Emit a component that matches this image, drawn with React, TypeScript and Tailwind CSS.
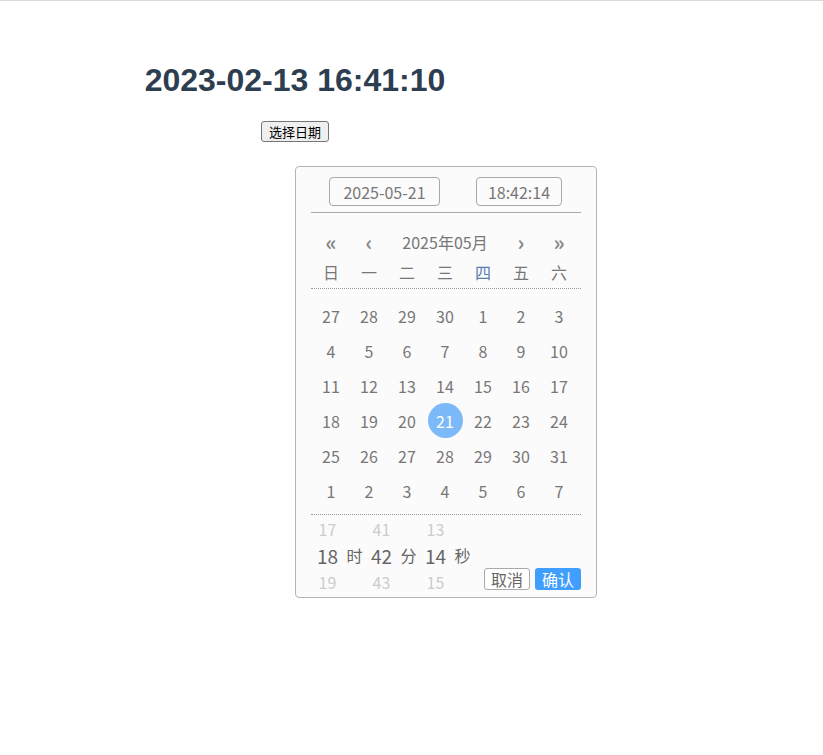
import React from "react";

const font = { fontFamily: '"Noto Sans CJK SC", "Noto Sans", sans-serif' };

const weeks = [
  [27, 28, 29, 30, 1, 2, 3],
  [4, 5, 6, 7, 8, 9, 10],
  [11, 12, 13, 14, 15, 16, 17],
  [18, 19, 20, 21, 22, 23, 24],
  [25, 26, 27, 28, 29, 30, 31],
  [1, 2, 3, 4, 5, 6, 7],
];

const weekdays = ["日", "一", "二", "三", "四", "五", "六"];

function TimeCol({ top, mid, bot, unit }: { top: string; mid: string; bot: string; unit: string }) {
  return (
    <>
      <div className="w-[27px] flex flex-col items-center">
        <div className="h-[26px] leading-[26px] text-[16px] text-[#cccccc]">{top}</div>
        <div className="h-[27px] leading-[27px] text-[19px] text-[#666]">{mid}</div>
        <div className="h-[26px] leading-[26px] text-[16px] text-[#cccccc]">{bot}</div>
      </div>
      <div className="w-[27px] flex flex-col items-center">
        <div className="h-[26px]" />
        <div className="h-[27px] leading-[27px] text-[16px] text-[#666]">{unit}</div>
      </div>
    </>
  );
}

export default function App() {
  return (
    <div className="min-h-[755px] bg-white border-t border-[#d9d9d9]">
      <div className="w-[590px] text-center pt-[61px]">
        <h1
          className="text-[32px] font-bold leading-[37px] text-[#2c3e50]"
          style={{ fontFamily: '"Liberation Sans", Arial, sans-serif' }}
        >
          2023-02-13 16:41:10
        </h1>
        <div className="mt-[22px] flex justify-center">
          <button
            className="h-[21px] px-[7px] border border-[#767676] rounded-[3px] bg-[#efefef] text-[13px] leading-[17px] text-black"
            style={font}
          >
            选择日期
          </button>
        </div>
        <div
          className="mt-[24px] ml-[295px] w-[302px] h-[432px] border border-[#b4b4b4] rounded-[4px] bg-[#fbfbfb] text-left px-[15px] flex flex-col"
          style={font}
        >
          <div className="pt-[10px] flex">
            <div className="ml-[18px] w-[111px] h-[29px] border border-[#a8a8a8] rounded-[4px] flex items-center justify-center text-[16px] text-[#777]">
              2025-05-21
            </div>
            <div className="ml-[36px] w-[86px] h-[29px] border border-[#a8a8a8] rounded-[4px] flex items-center justify-center text-[16px] text-[#777]">
              18:42:14
            </div>
          </div>
          <div className="mt-[6px] border-t border-[#aaaaaa]" />
          <div className="mt-[14px] ml-[1px] grid grid-cols-[repeat(7,38px)] h-[30px] items-center text-[#777]">
            <div className="text-center text-[21px] font-bold leading-[30px] text-[#888]">«</div>
            <div className="text-center text-[21px] font-bold leading-[30px] text-[#888]">‹</div>
            <div className="col-span-3 text-center text-[16px] leading-[30px]">2025年05月</div>
            <div className="text-center text-[21px] font-bold leading-[30px] text-[#888]">›</div>
            <div className="text-center text-[21px] font-bold leading-[30px] text-[#888]">»</div>
          </div>
          <div className="border-b border-dotted border-[#999]">
            <div className="ml-[1px] grid grid-cols-[repeat(7,38px)] h-[31px] items-start">
              {weekdays.map((w, i) => (
                <div
                  key={i}
                  className={`text-center text-[16px] leading-[30px] ${i === 4 ? "text-[#5a7db0]" : "text-[#777]"}`}
                >
                  {w}
                </div>
              ))}
            </div>
          </div>
          <div className="pt-[9px] pb-[6px] border-b border-dotted border-[#999]">
            {weeks.map((row, r) => (
              <div key={r} className="ml-[1px] grid grid-cols-[repeat(7,38px)] h-[35px]">
                {row.map((d, c) => {
                  const sel = r === 3 && c === 3;
                  return (
                    <div key={c} className="flex items-center justify-center">
                      {sel ? (
                        <div className="w-[35px] h-[35px] rounded-full bg-[#7cb9f8] text-white flex items-center justify-center text-[16px]">
                          {d}
                        </div>
                      ) : (
                        <span className="text-[16px] text-[#777]">{d}</span>
                      )}
                    </div>
                  );
                })}
              </div>
            ))}
          </div>
          <div className="pt-[1px] flex justify-between">
            <div className="flex ml-[3px]">
              <TimeCol top="17" mid="18" bot="19" unit="时" />
              <TimeCol top="41" mid="42" bot="43" unit="分" />
              <TimeCol top="13" mid="14" bot="15" unit="秒" />
            </div>
            <div className="flex self-end mb-[5px] gap-[5px]">
              <button className="w-[46px] h-[22px] border border-[#aaa] rounded-[3px] bg-white text-[16px] leading-[20px] text-[#666]">
                取消
              </button>
              <button className="w-[46px] h-[22px] rounded-[3px] bg-[#409eff] text-[16px] leading-[22px] text-white">
                确认
              </button>
            </div>
          </div>
        </div>
      </div>
    </div>
  );
}
